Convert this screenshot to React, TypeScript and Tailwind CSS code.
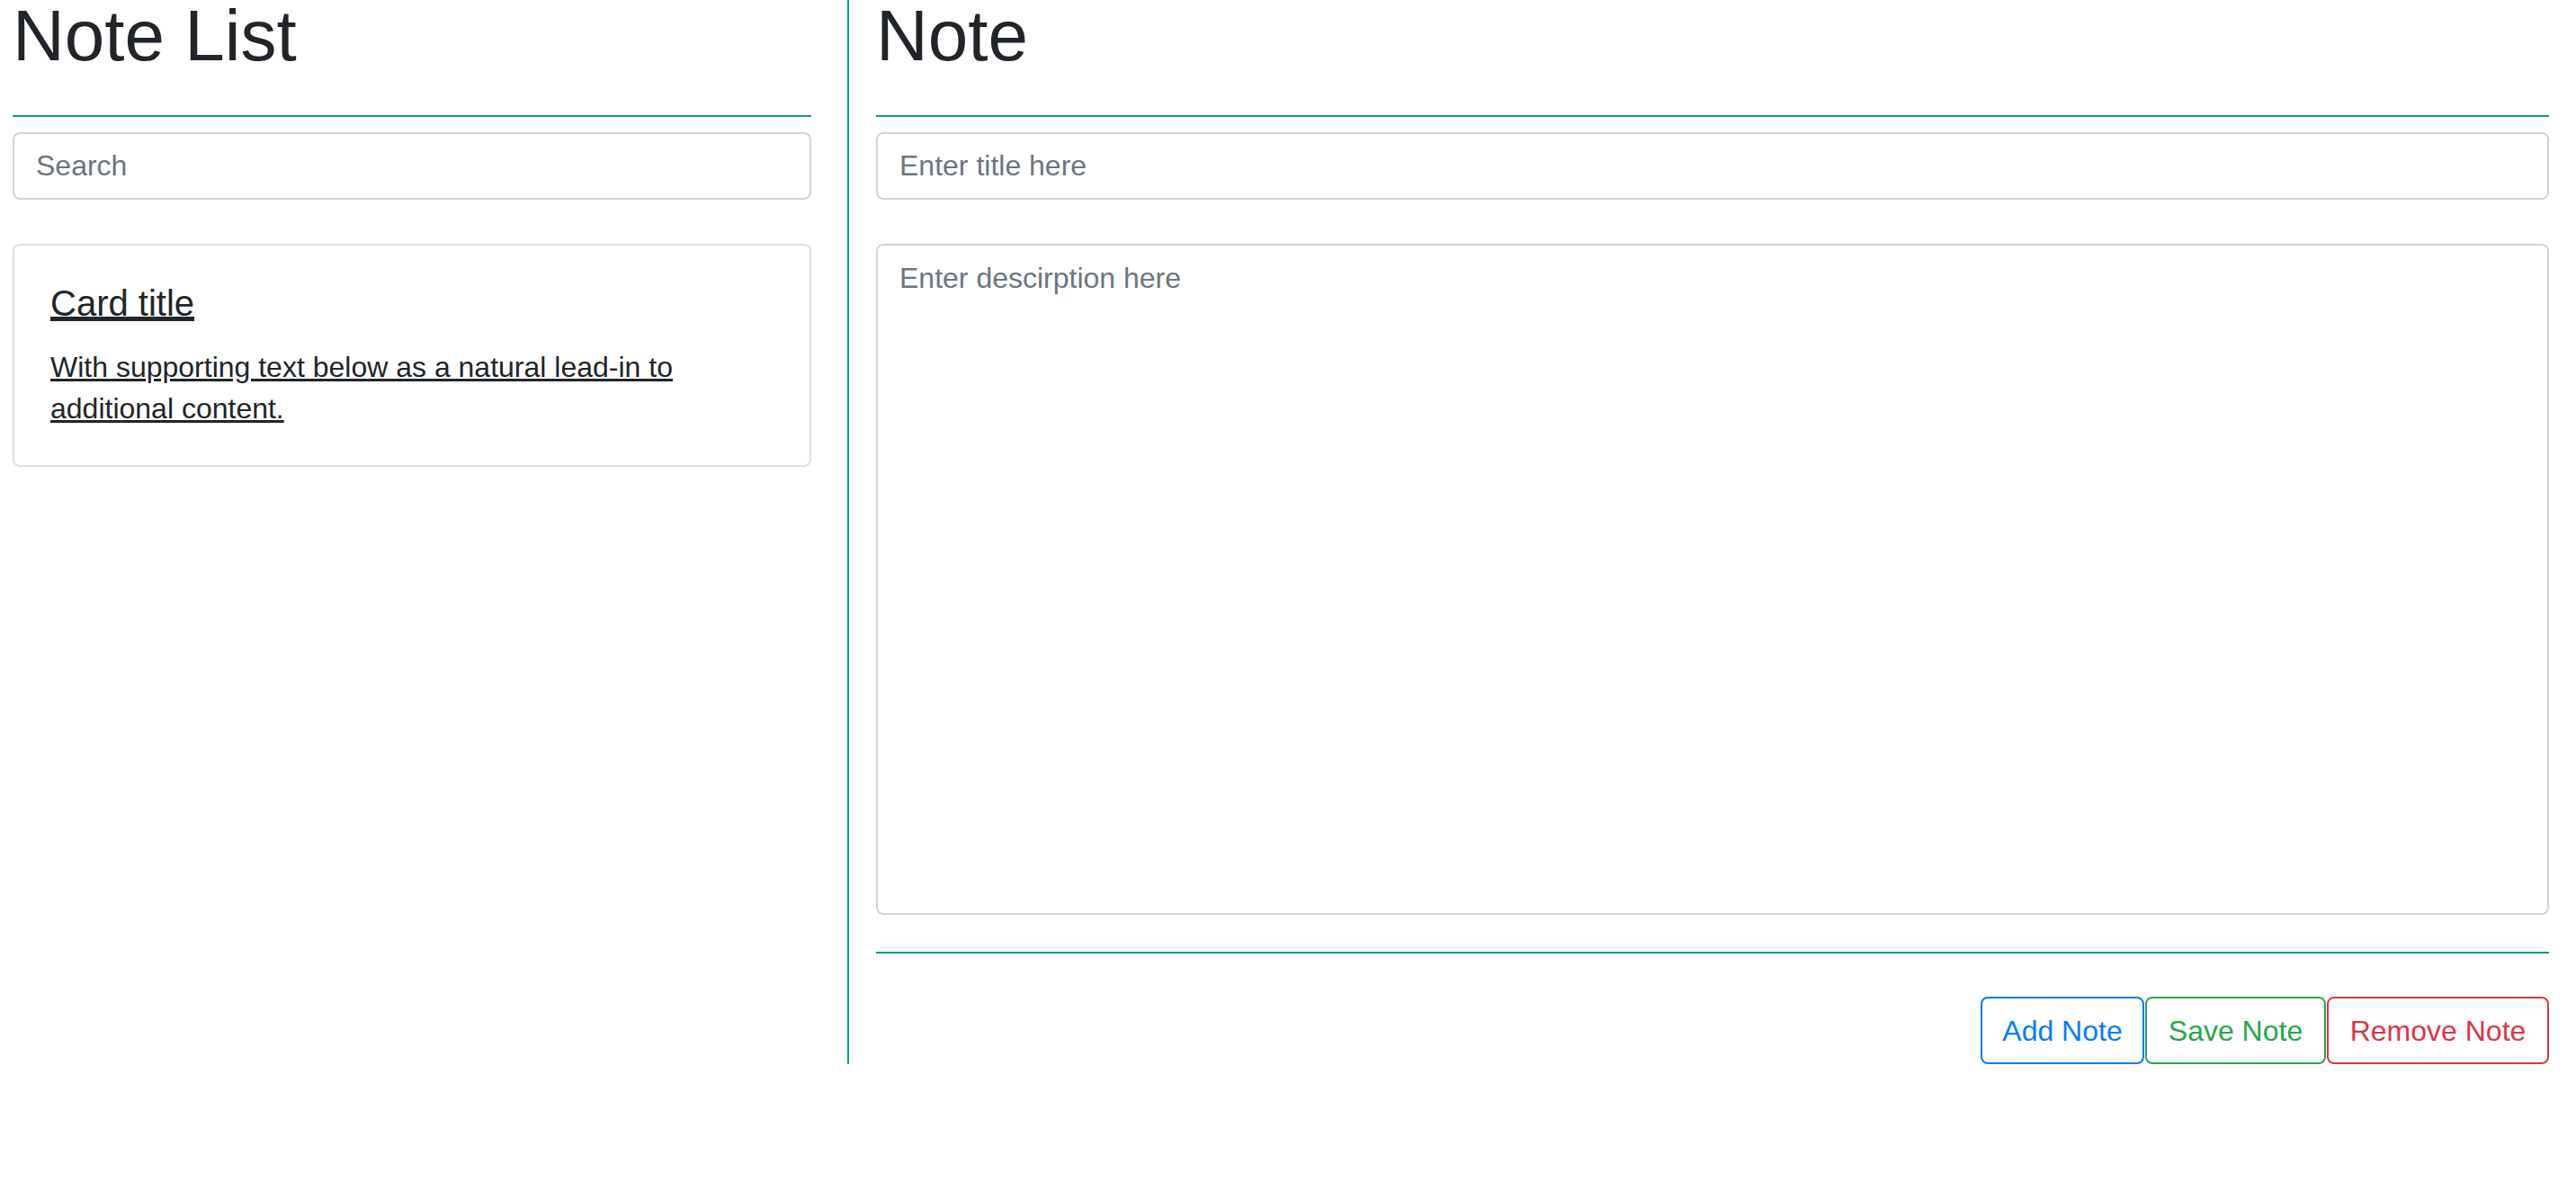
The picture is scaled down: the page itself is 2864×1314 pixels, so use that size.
import { useState } from "react";

export default function App() {
  const [search, setSearch] = useState("");
  const [title, setTitle] = useState("");
  const [description, setDescription] = useState("");

  return (
    <div className="flex items-stretch bg-white text-[#212529] font-['Liberation_Sans',Arial,sans-serif]">
      {/* Lista de notas */}
      <div className="w-[944px] shrink-0 border-r-2 border-[#149691] pl-[14px] pr-[40px]">
        <h1 className="h-[80px] text-[80px] leading-[80px] font-normal">Note List</h1>
        <hr className="mt-[48px] border-t-2 border-[#149691]" />
        <input
          value={search}
          onChange={(e) => setSearch(e.target.value)}
          placeholder="Search"
          className="mt-[17px] block h-[75px] w-full rounded-[8px] border-2 border-[#ced4da] px-[24px] text-[32px] leading-[48px] text-[#495057] placeholder:text-[#6c757d] outline-none"
        />

        <a
          href="#"
          className="mt-[49px] block rounded-[8px] border-2 border-[#dfdfdf] p-[40px] text-[#212529] underline"
        >
          <h5 className="mb-[24px] text-[40px] leading-[48px] font-normal underline decoration-2">Card title</h5>
          <p className="text-[32px] leading-[46px]">
            With supporting text below as a natural lead-in to additional content.
          </p>
        </a>
      </div>

      {/* Nota */}
      <div className="flex-1 pl-[30px] pr-[30px]">
        <h1 className="h-[80px] text-[80px] leading-[80px] font-normal">Note</h1>
        <hr className="mt-[48px] border-t-2 border-[#149691]" />
        <input
          value={title}
          onChange={(e) => setTitle(e.target.value)}
          placeholder="Enter title here"
          className="mt-[17px] block h-[75px] w-full rounded-[8px] border-2 border-[#ced4da] px-[24px] text-[32px] leading-[48px] text-[#495057] placeholder:text-[#6c757d] outline-none"
        />
        <textarea
          value={description}
          onChange={(e) => setDescription(e.target.value)}
          placeholder="Enter descirption here"
          className="mt-[49px] block h-[746px] w-full resize-none rounded-[8px] border-2 border-[#ced4da] px-[24px] py-[12px] text-[32px] leading-[48px] text-[#495057] placeholder:text-[#6c757d] outline-none"
        />
        <hr className="mt-[41px] border-t-2 border-[#149691]" />

        <div className="mt-[48px] flex justify-end gap-[1px]">
          <button className="h-[75px] w-[182px] rounded-[8px] border-2 border-[#007bff] text-[32px] leading-[48px] text-[#007bff]">
            Add Note
          </button>
          <button className="h-[75px] w-[201px] rounded-[8px] border-2 border-[#28a745] text-[32px] leading-[48px] text-[#28a745]">
            Save Note
          </button>
          <button className="h-[75px] w-[247px] rounded-[8px] border-2 border-[#dc3545] text-[32px] leading-[48px] text-[#dc3545]">
            Remove Note
          </button>
        </div>
      </div>
    </div>
  );
}
